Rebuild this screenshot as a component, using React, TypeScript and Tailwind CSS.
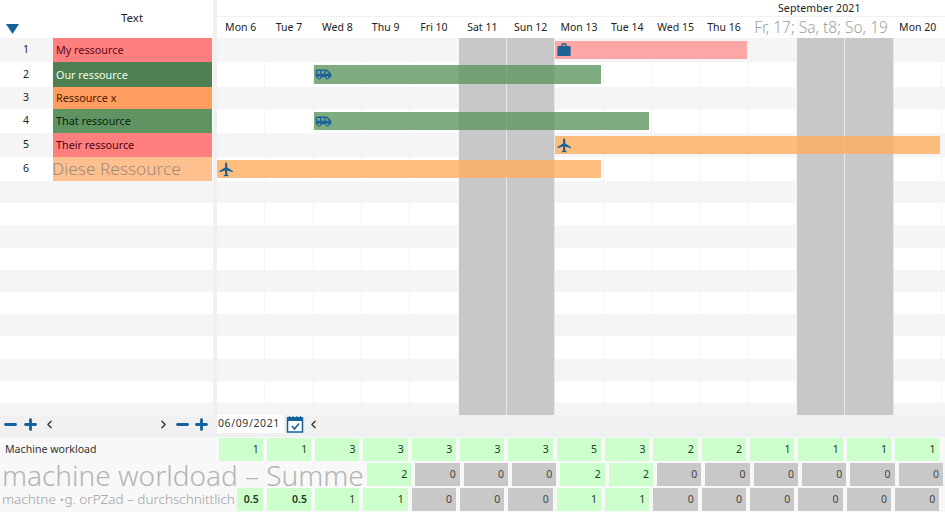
import { Minus, Plus, ChevronLeft, ChevronRight } from "lucide-react";
import { MdFlight, MdWork, MdAirportShuttle } from "react-icons/md";

const days = ["Mon 6","Tue 7","Wed 8","Thu 9","Fri 10","Sat 11","Sun 12","Mon 13","Tue 14","Wed 15","Thu 16"];

type Bar = { from: number; width: number; color: string; icon: "bag" | "bus" | "plane" };
type Row = { h: string; label?: string; labelCls?: string; bar?: Bar };

const pinkBar = "bg-[#ff9292]/80";
const greenBar = "bg-[#5f9662]/80";
const orangeBar = "bg-[#fcae60]/80";

const rows: Row[] = [
  { h: "h-[24px]", label: "My ressource", labelCls: "bg-[#ff7f7f] text-[#5a0a14] text-[10.8px] pt-[1px]", bar: { from: 338, width: 192, color: pinkBar, icon: "bag" } },
  { h: "h-[25px]", label: "Our ressource", labelCls: "bg-[#4d7f50] text-[#f0fff0] text-[10.8px] pt-[1px]", bar: { from: 97, width: 287, color: greenBar, icon: "bus" } },
  { h: "h-[22px]", label: "Ressource x", labelCls: "bg-[#ff9d5e] text-[#4a1a00] text-[10.8px] pt-[1px]" },
  { h: "h-[24px]", label: "That ressource", labelCls: "bg-[#5f9462] text-[#06260c] text-[10.8px] pt-[1px]", bar: { from: 97, width: 335, color: greenBar, icon: "bus" } },
  { h: "h-[24px]", label: "Their ressource", labelCls: "bg-[#ff7f7f] text-[#4a0512] text-[10.8px] pt-[1px]", bar: { from: 338, width: 385, color: orangeBar, icon: "plane" } },
  { h: "h-[24px]", label: "Diese Ressource", labelCls: "bg-[#ffc090] text-[#a08a78] text-[17.3px] font-light", bar: { from: 0, width: 384, color: orangeBar, icon: "plane" } },
  ...Array.from({ length: 11 }, () => ({ h: "h-[22.2px]" })),
];

const weekend = [5, 6, 12, 13];
const workload = [1, 1, 3, 3, 3, 3, 3, 5, 3, 2, 2, 1, 1, 1, 1];
const sum = [2, 0, 0, 0, 2, 2, 0, 0, 0, 0, 0, 0];
const avg = [1, 1, 0, 0, 0, 1, 1, 0, 0, 0, 0, 0, 0];

function Cell({ v, w = "w-[48.33px]", bold }: { v: string | number; w?: string; bold?: boolean }) {
  const gray = v === 0;
  return (
    <div className={`${w} shrink-0 pr-[3px] pl-[1px] h-full`}>
      <div className={`h-full flex items-center justify-end pr-[4px] ${gray ? "bg-[#c8c8c8] text-[#444]" : "bg-[#ccffcc] text-[#1c3a24]"} ${bold ? "font-semibold" : ""}`}>{v}</div>
    </div>
  );
}

function BarIcon({ kind }: { kind: Bar["icon"] }) {
  const cls = "text-[#1c6296] shrink-0";
  if (kind === "bag") return <MdWork size={16} className={cls} />;
  if (kind === "bus") return <MdAirportShuttle size={17} className={cls} />;
  return <MdFlight size={17} className={cls} />;
}

export default function App() {
  return (
    <div className="w-[945px] h-[512px] overflow-hidden bg-white flex flex-col text-[11px] text-[#222]" style={{ fontFamily: '"Noto Sans", sans-serif' }}>
      {/* header */}
      <div className="h-[38px] flex shrink-0">
        <div className="w-[213px] relative flex shrink-0">
          <div className="w-[53px] flex items-end pb-[4px] pl-[6px]">
            <svg width="13" height="10" viewBox="0 0 13 10"><path d="M0 0h13L6.5 10z" fill="#15619c" /></svg>
          </div>
          <div className="flex-1 flex items-center justify-center pb-[2px] pr-[2px] text-[11.5px]">Text</div>
        </div>
        <div className="w-[4px] bg-[#f0f0f0] shrink-0" />
        <div className="flex-1 flex flex-col">
          <div className="h-[17px] border-b border-[#f0f0f0] flex items-center pl-[561px] leading-none text-[10.5px] tracking-[0.1px]">September 2021</div>
          <div className="flex-1 flex items-center">
            {days.map((d) => (
              <div key={d} className="w-[48.33px] shrink-0 text-center text-[10.5px] leading-none pr-[1px]">{d}</div>
            ))}
            <div className="w-[144.9px] shrink-0 text-center whitespace-nowrap text-[15.5px] font-light text-[#a0a0a0] leading-none">Fr, 17; Sa, t8; So, 19</div>
            <div className="w-[48.33px] shrink-0 text-center text-[10.5px] leading-none">Mon 20</div>
          </div>
        </div>
      </div>

      {/* body rows */}
      <div className="h-[377px] overflow-hidden shrink-0">
        {rows.map((r, i) => (
          <div key={i} className={`${r.h} flex ${i % 2 === 0 ? "bg-[#f5f5f5]" : "bg-white"}`}>
            <div className="w-[53px] shrink-0 flex items-center justify-center text-[10.5px] pr-[1px]">{r.label ? i + 1 : ""}</div>
            <div className={`w-[159px] shrink-0 mr-[1px] flex items-center pl-[3px] whitespace-nowrap ${r.labelCls ?? ""}`}>
              {i === 5 ? <span className="-ml-[4px]">{r.label}</span> : r.label}
            </div>
            <div className="w-[4px] bg-[#f0f0f0] shrink-0" />
            <div className="flex-1 relative flex">
              {Array.from({ length: 15 }, (_, c) => (
                <div key={c} className={`w-[48.33px] shrink-0 border-r ${weekend.includes(c) ? "bg-[#c8c8c8] border-[#e8e8e8]" : "border-[#f4f4f4]"}`} />
              ))}
              {r.bar && (
                <div
                  className={`absolute top-[3px] bottom-[3px] flex items-center pl-[1px] ${r.bar.color}`}
                  style={{ left: r.bar.from, width: r.bar.width }}
                >
                  <BarIcon kind={r.bar.icon} />
                </div>
              )}
            </div>
          </div>
        ))}
      </div>

      {/* toolbar */}
      <div className="h-[22px] bg-[#f0f0f0] flex items-start shrink-0 text-[#15619c]">
        <div className="w-[217px] h-[18px] shrink-0 flex items-center pl-[2px]">
          <Minus size={17} strokeWidth={4} />
          <Plus size={17} strokeWidth={4} className="ml-[2.5px]" />
          <ChevronLeft size={13} strokeWidth={2.5} className="ml-[4.5px] text-[#333]" />
          <ChevronRight size={13} strokeWidth={2.5} className="ml-auto mr-[4.5px] text-[#333]" />
          <Minus size={17} strokeWidth={4} />
          <Plus size={17} strokeWidth={4} className="ml-[2px] mr-[7px]" />
        </div>
        <div className="w-[67px] h-[18px] bg-white flex items-center pl-[1px] text-[10.5px] text-[#333] tracking-[0.6px] shrink-0 whitespace-nowrap">06/09/2021</div>
        <svg width="18" height="18" viewBox="0 0 18 18" className="ml-[2px]">
          <rect x="1.5" y="3" width="15" height="14" fill="#fff" stroke="#15619c" strokeWidth="1.5" />
          <rect x="1.5" y="2" width="15" height="4" fill="#15619c" />
          <path d="M3.5 1v2M7 1v2M11 1v2M14.5 1v2" stroke="#15619c" strokeWidth="1" />
          <path d="M6 11l2.5 3L13 8.5" fill="none" stroke="#15619c" strokeWidth="1.6" />
        </svg>
        <ChevronLeft size={13} strokeWidth={2.5} className="ml-[3px] mt-[2.5px] text-[#333]" />
      </div>

      {/* workload rows */}
      <div className="flex-1 bg-[#f8f8f8] flex flex-col pt-[1px] gap-[2px] text-[10.5px]">
        <div className="h-[23px] flex shrink-0">
          <div className="w-[217.5px] shrink-0 flex items-center pl-[5px] text-[#333] text-[10.6px]">Machine workload</div>
          {workload.map((v, i) => <Cell key={i} v={v} />)}
        </div>
        <div className="h-[23px] flex shrink-0">
          <div className="w-[366px] shrink-0 flex items-center pl-[2px] text-[28px] font-light text-[#b4b4b4] whitespace-nowrap leading-none">machine worldoad – Summe</div>
          {sum.map((v, i) => <Cell key={i} v={v} />)}
        </div>
        <div className="h-[23px] flex shrink-0">
          <div className="w-[236px] shrink-0 flex items-center pl-[2px] text-[13.5px] font-light text-[#a0a0a0] whitespace-nowrap leading-none overflow-hidden">machtne •g. orPZad – durchschnittlich</div>
          <Cell v="0.5" w="w-[29.7px]" bold />
          <Cell v="0.5" bold />
          {avg.map((v, i) => <Cell key={i} v={v} />)}
        </div>
      </div>
    </div>
  );
}
